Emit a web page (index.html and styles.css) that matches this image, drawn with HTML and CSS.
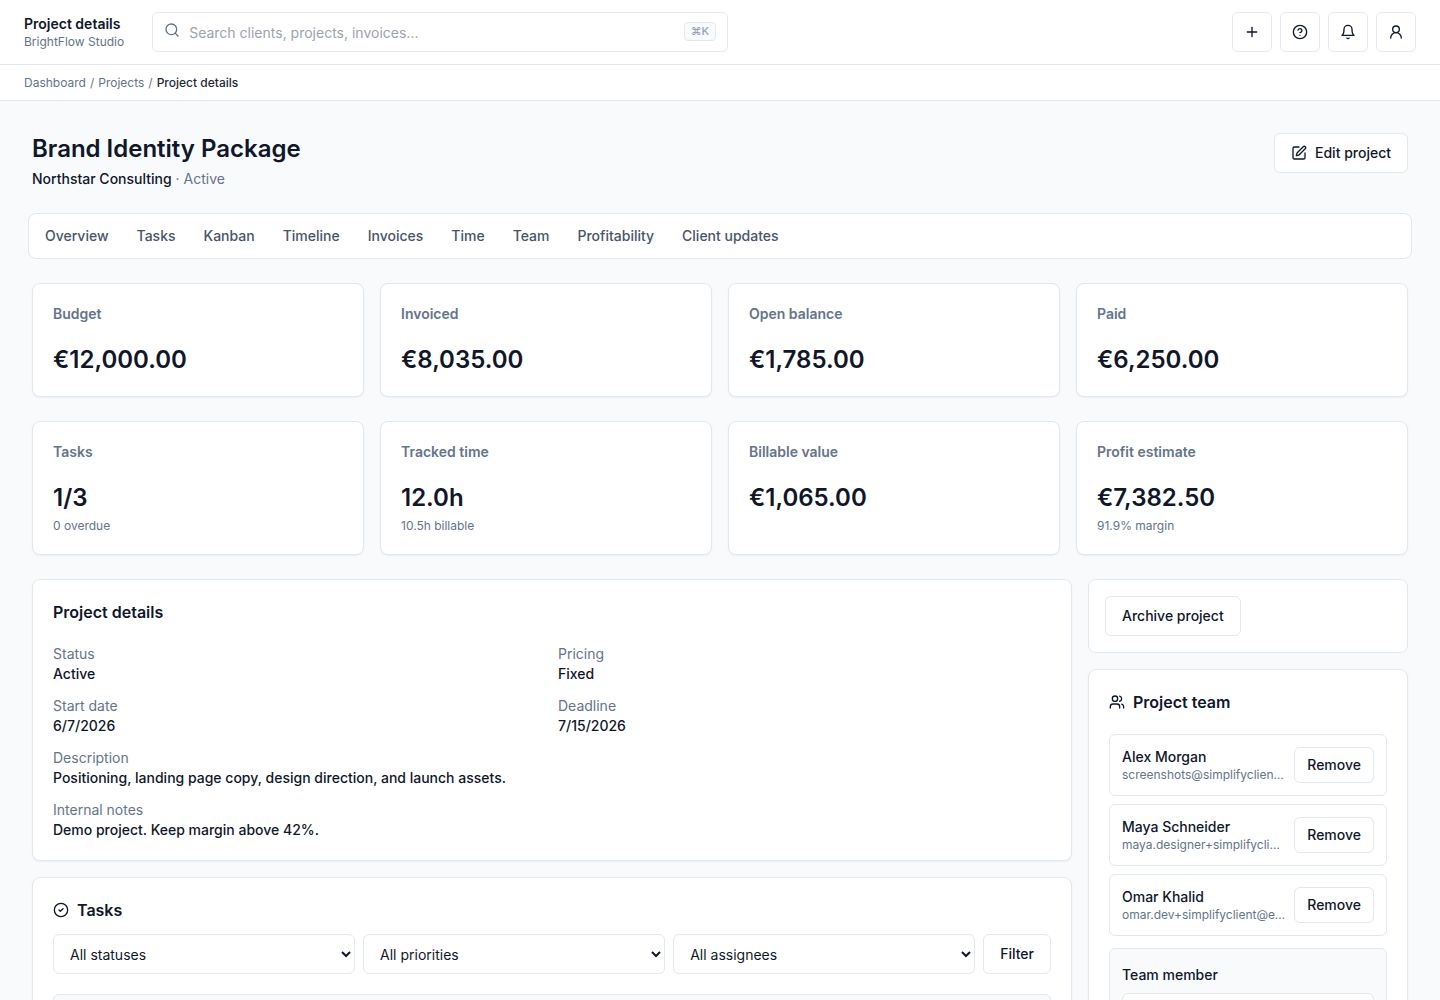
FILE: index.html
```html
<!DOCTYPE html>
<html lang="en">
<head>
<meta charset="utf-8">
<meta name="viewport" content="width=device-width, initial-scale=1">
<title>Project details - BrightFlow Studio</title>
<link rel="stylesheet" href="styles.css">
</head>
<body>
<header class="topbar">
  <div class="brand">
    <p class="brand-title">Project details</p>
    <p class="brand-sub">BrightFlow Studio</p>
  </div>
  <div class="search">
    <svg class="icon search-icon" viewBox="0 0 24 24" aria-hidden="true"><circle cx="11" cy="11" r="8"/><path d="m21 21-4.3-4.3"/></svg>
    <input class="search-input" type="search" aria-label="Search" placeholder="Search clients, projects, invoices...">
    <kbd class="search-key">⌘K</kbd>
  </div>
  <div class="actions">
    <button class="btn btn-icon" type="button" aria-label="Create"><svg class="icon" viewBox="0 0 24 24"><path d="M5 12h14"/><path d="M12 5v14"/></svg></button>
    <button class="btn btn-icon" type="button" aria-label="Help"><svg class="icon" viewBox="0 0 24 24"><circle cx="12" cy="12" r="10"/><path d="M9.09 9a3 3 0 0 1 5.83 1c0 2-3 3-3 3"/><path d="M12 17h.01"/></svg></button>
    <button class="btn btn-icon" type="button" aria-label="Notifications"><svg class="icon" viewBox="0 0 24 24"><path d="M6 8a6 6 0 0 1 12 0c0 7 3 9 3 9H3s3-2 3-9"/><path d="M10.3 21a1.94 1.94 0 0 0 3.4 0"/></svg></button>
    <button class="btn btn-icon" type="button" aria-label="Account"><svg class="icon" viewBox="0 0 24 24"><circle cx="12" cy="8" r="5"/><path d="M20 21a8 8 0 0 0-16 0"/></svg></button>
  </div>
</header>

<nav class="breadcrumb" aria-label="Breadcrumb">
  <a href="#">Dashboard</a><span>/</span><a href="#">Projects</a><span>/</span><span class="current">Project details</span>
</nav>

<main class="page">
  <div class="page-head">
    <div>
      <h1 class="page-title">Brand Identity Package</h1>
      <p class="page-sub"><a href="#">Northstar Consulting</a> · Active</p>
    </div>
    <button class="btn" type="button"><svg class="icon" viewBox="0 0 24 24" aria-hidden="true"><path d="M12 3H5a2 2 0 0 0-2 2v14a2 2 0 0 0 2 2h14a2 2 0 0 0 2-2v-7"/><path d="M18.375 2.625a1 1 0 0 1 3 3l-9.013 9.014a2 2 0 0 1-.853.505l-2.873.84a.5.5 0 0 1-.62-.62l.84-2.873a2 2 0 0 1 .506-.852z"/></svg>Edit project</button>
  </div>

  <nav class="tabs" aria-label="Project sections">
    <a href="#">Overview</a>
    <a href="#">Tasks</a>
    <a href="#">Kanban</a>
    <a href="#">Timeline</a>
    <a href="#">Invoices</a>
    <a href="#">Time</a>
    <a href="#">Team</a>
    <a href="#">Profitability</a>
    <a href="#">Client updates</a>
  </nav>

  <section class="stats">
    <article class="card"><h2 class="stat-label">Budget</h2><p class="stat-value">€12,000.00</p></article>
    <article class="card"><h2 class="stat-label">Invoiced</h2><p class="stat-value">€8,035.00</p></article>
    <article class="card"><h2 class="stat-label">Open balance</h2><p class="stat-value">€1,785.00</p></article>
    <article class="card"><h2 class="stat-label">Paid</h2><p class="stat-value">€6,250.00</p></article>
  </section>

  <section class="stats">
    <article class="card"><h2 class="stat-label">Tasks</h2><p class="stat-value">1/3</p><p class="stat-hint">0 overdue</p></article>
    <article class="card"><h2 class="stat-label">Tracked time</h2><p class="stat-value">12.0h</p><p class="stat-hint">10.5h billable</p></article>
    <article class="card"><h2 class="stat-label">Billable value</h2><p class="stat-value">€1,065.00</p></article>
    <article class="card"><h2 class="stat-label">Profit estimate</h2><p class="stat-value">€7,382.50</p><p class="stat-hint">91.9% margin</p></article>
  </section>

  <div class="columns">
    <div class="stack">
      <section class="card">
        <h2 class="card-title">Project details</h2>
        <dl class="details">
          <div><dt>Status</dt><dd>Active</dd></div>
          <div><dt>Pricing</dt><dd>Fixed</dd></div>
          <div><dt>Start date</dt><dd>6/7/2026</dd></div>
          <div><dt>Deadline</dt><dd>7/15/2026</dd></div>
          <div class="wide"><dt>Description</dt><dd>Positioning, landing page copy, design direction, and launch assets.</dd></div>
          <div class="wide"><dt>Internal notes</dt><dd>Demo project. Keep margin above 42%.</dd></div>
        </dl>
      </section>

      <section class="card">
        <h2 class="card-title"><svg class="icon" viewBox="0 0 24 24" aria-hidden="true"><circle cx="12" cy="12" r="10"/><path d="m9 12 2 2 4-4"/></svg>Tasks</h2>
        <form class="filters">
          <select class="field" aria-label="Status"><option>All statuses</option></select>
          <select class="field" aria-label="Priority"><option>All priorities</option></select>
          <select class="field" aria-label="Assignee"><option>All assignees</option></select>
          <button class="btn" type="button">Filter</button>
        </form>
        <div class="panel task-panel"></div>
      </section>
    </div>

    <aside class="stack">
      <div class="card card-plain">
        <button class="btn" type="button">Archive project</button>
      </div>
      <section class="card">
        <h2 class="card-title"><svg class="icon" viewBox="0 0 24 24" aria-hidden="true"><path d="M16 21v-2a4 4 0 0 0-4-4H6a4 4 0 0 0-4 4v2"/><circle cx="9" cy="7" r="4"/><path d="M22 21v-2a4 4 0 0 0-3-3.87"/><path d="M16 3.13a4 4 0 0 1 0 7.75"/></svg>Project team</h2>
        <ul class="team">
          <li class="member"><div class="member-text"><p class="member-name">Alex Morgan</p><p class="member-mail">screenshots@simplifyclient.example</p></div><button class="btn btn-small" type="button">Remove</button></li>
          <li class="member"><div class="member-text"><p class="member-name">Maya Schneider</p><p class="member-mail">maya.designer+simplifyclient@example.com</p></div><button class="btn btn-small" type="button">Remove</button></li>
          <li class="member"><div class="member-text"><p class="member-name">Omar Khalid</p><p class="member-mail">omar.dev+simplifyclient@example.com</p></div><button class="btn btn-small" type="button">Remove</button></li>
        </ul>
        <form class="panel add-member">
          <label for="member">Team member</label>
          <select class="field" id="member"></select>
        </form>
      </section>
    </aside>
  </div>
</main>
</body>
</html>
```
FILE: styles.css
```css
*, *::before, *::after {
  box-sizing: border-box;
}

:root {
  --ink: #0f172a;
  --soft: #475569;
  --muted: #64748b;
  --line: #e2e8f0;
  --ground: #f8fafc;
}

body {
  margin: 0;
  background: var(--ground);
  color: var(--ink);
  font: 14px/20px Inter, "Liberation Sans", sans-serif;
}

h1, h2, p, dl, dd, ul {
  margin: 0;
  padding: 0;
}

a {
  color: inherit;
  text-decoration: none;
}

button, input, select {
  font: inherit;
  color: inherit;
}

.icon {
  width: 16px;
  height: 16px;
  flex: none;
  fill: none;
  stroke: currentColor;
  stroke-width: 2;
  stroke-linecap: round;
  stroke-linejoin: round;
}

.btn {
  display: inline-flex;
  align-items: center;
  justify-content: center;
  gap: 8px;
  height: 40px;
  padding: 0 16px;
  border: 1px solid var(--line);
  border-radius: 6px;
  background: #fff;
  font-weight: 500;
  white-space: nowrap;
}

.btn-icon {
  width: 40px;
  padding: 0;
}

.btn-small {
  height: 36px;
  padding: 0 12px;
}

.topbar {
  display: flex;
  align-items: center;
  gap: 28px;
  padding: 12px 24px;
  border-bottom: 1px solid var(--line);
  background: #fff;
}

.brand-title {
  font-weight: 600;
}

.brand-sub {
  color: var(--muted);
  font-size: 12px;
  line-height: 16px;
}

.search {
  position: relative;
  flex: 1;
  max-width: 576px;
}

.search-icon {
  position: absolute;
  top: 10px;
  left: 12px;
  color: var(--muted);
}

.search-input {
  display: block;
  width: 100%;
  height: 40px;
  padding: 0 48px 0 36px;
  border: 1px solid var(--line);
  border-radius: 6px;
  background: #fff;
  appearance: none;
}

.search-input::placeholder {
  color: #9ca3af;
}

.search-key {
  position: absolute;
  top: 10px;
  right: 12px;
  padding: 0 6px;
  border: 1px solid var(--line);
  border-radius: 4px;
  background: var(--ground);
  color: #94a3b8;
  font: 500 11px/17px Inter, sans-serif;
}

.actions {
  display: flex;
  gap: 8px;
  margin-left: auto;
}

.breadcrumb {
  display: flex;
  align-items: center;
  gap: 4px;
  min-height: 36px;
  padding: 0 24px;
  border-bottom: 1px solid var(--line);
  background: #fff;
  color: var(--muted);
  font-size: 12px;
  line-height: 16px;
}

.current {
  color: #1e293b;
  font-weight: 500;
}

.page {
  display: flex;
  flex-direction: column;
  gap: 24px;
  padding: 32px;
}

.page-head {
  display: flex;
  align-items: flex-start;
  justify-content: space-between;
}

.page-title {
  font-size: 24px;
  line-height: 32px;
  font-weight: 600;
}

.page-sub {
  margin-top: 4px;
  color: var(--muted);
}

.page-sub a {
  color: var(--ink);
  font-weight: 500;
}

.tabs {
  display: flex;
  gap: 4px;
  margin: 0 -4px;
  padding: 4px;
  border: 1px solid var(--line);
  border-radius: 8px;
  background: #fff;
  color: var(--soft);
  font-weight: 500;
}

.tabs a {
  padding: 8px 12px;
}

.stats {
  display: grid;
  grid-template-columns: repeat(4, 1fr);
  gap: 16px;
}

.card {
  padding: 20px;
  border: 1px solid var(--line);
  border-radius: 8px;
  background: #fff;
  box-shadow: 0 1px 2px rgb(15 23 42 / 5%);
}

.card-plain {
  padding: 16px;
  box-shadow: none;
}

.stat-label {
  margin-bottom: 20px;
  color: var(--muted);
  font-size: 14px;
  font-weight: 600;
}

.stat-value {
  font-size: 24px;
  line-height: 32px;
  font-weight: 600;
}

.stat-hint {
  margin-top: 4px;
  color: var(--muted);
  font-size: 12px;
  line-height: 16px;
}

.columns {
  display: grid;
  grid-template-columns: minmax(0, 1fr) 320px;
  align-items: start;
  gap: 16px;
}

.stack {
  display: grid;
  grid-template-columns: minmax(0, 1fr);
  gap: 16px;
}

.card-title {
  display: flex;
  align-items: center;
  gap: 8px;
  font-size: 16px;
  line-height: 24px;
  font-weight: 600;
}

.details {
  display: grid;
  grid-template-columns: 1fr 1fr;
  gap: 12px;
  margin-top: 20px;
}

.details dt {
  color: var(--muted);
}

.details dd {
  font-weight: 500;
}

.wide {
  grid-column: 1 / -1;
}

.filters {
  display: grid;
  grid-template-columns: repeat(3, 1fr) auto;
  gap: 8px;
  margin: 12px 0 20px;
}

.field {
  width: 100%;
  height: 40px;
  padding: 0 12px;
  border: 1px solid var(--line);
  border-radius: 6px;
  background: #fff;
}

.panel {
  border: 1px solid var(--line);
  border-radius: 6px;
  background: var(--ground);
}

.task-panel {
  min-height: 120px;
}

.team {
  display: grid;
  grid-template-columns: minmax(0, 1fr);
  gap: 8px;
  margin: 20px 0 12px;
  list-style: none;
}

.member {
  display: flex;
  align-items: center;
  gap: 8px;
  padding: 12px;
  border: 1px solid var(--line);
  border-radius: 6px;
}

.member-text {
  flex: 1;
  min-width: 0;
}

.member-name {
  font-weight: 500;
}

.member-mail {
  overflow: hidden;
  color: var(--muted);
  font-size: 12px;
  line-height: 16px;
  text-overflow: ellipsis;
  white-space: nowrap;
}

.add-member {
  display: grid;
  gap: 8px;
  padding: 16px 12px;
  font-weight: 500;
}
```
